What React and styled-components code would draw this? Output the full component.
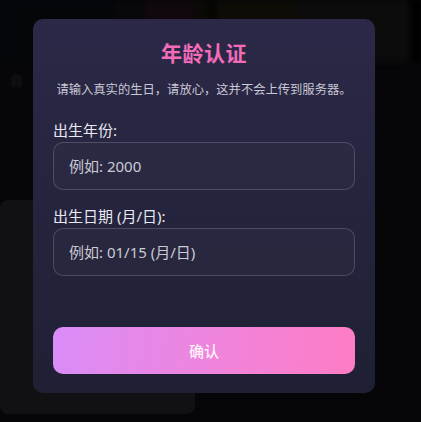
import React from 'react';
import styled, { createGlobalStyle } from 'styled-components';

const GlobalStyle = createGlobalStyle`
  * { box-sizing: border-box; }
  html, body {
    margin: 0;
    padding: 0;
    background: #050507;
    font-family: "Noto Sans", "Noto Sans CJK SC", sans-serif;
  }
`;

const Page = styled.div`
  position: relative;
  width: 100%;
  height: 422px;
  overflow: hidden;
  background: #060608;
`;

const BgStrip = styled.div`
  display: flex;
  height: 62px;
  filter: blur(3px);
`;

const BgTile = styled.div`
  flex: ${p => p.$flex || 1};
  background: ${p => p.$color};
`;

const BgText = styled.div`
  padding: 8px 0 0 10px;
  height: 130px;
  color: #1c1a20;
  font-size: 13px;
  filter: blur(1px);
`;

const BgCard = styled.div`
  width: 195px;
  height: 214px;
  margin-top: 8px;
  border-radius: 8px;
  background: #111113;
`;

const Overlay = styled.div`
  position: absolute;
  inset: 0;
  display: flex;
  align-items: flex-start;
  justify-content: flex-start;
  padding: 19px 0 0 33px;
`;

const Modal = styled.div`
  width: 342px;
  height: 374px;
  padding: 21px 20px 19px;
  border-radius: 10px;
  background: linear-gradient(180deg, #2b2947 0%, #25243e 50%, #1f2034 100%);
  display: flex;
  flex-direction: column;
`;

const Title = styled.h2`
  margin: 0;
  text-align: center;
  font-size: 21px;
  line-height: 27px;
  font-weight: 700;
  color: #f36cba;
  letter-spacing: 0.5px;
`;

const Subtitle = styled.p`
  margin: 13px 0 0;
  text-align: center;
  font-size: 12.3px;
  line-height: 19px;
  color: #c9c8d6;
  white-space: nowrap;
`;

const Field = styled.div`
  display: flex;
  flex-direction: column;
  gap: 1px;
  margin-top: ${p => p.$gap}px;
`;

const Label = styled.label`
  font-size: 15px;
  line-height: 21px;
  color: #e9e8f0;
`;

const Input = styled.input`
  height: 48px;
  padding: 0 15px;
  border-radius: 10px;
  border: 1px solid rgba(255, 255, 255, 0.17);
  background: rgba(255, 255, 255, 0.02);
  color: #eee;
  font-family: inherit;
  font-size: 15px;
  outline: none;

  &::placeholder {
    color: #cbcad4;
  }
`;

const ConfirmButton = styled.button`
  margin-top: auto;
  height: 47px;
  border: none;
  border-radius: 10px;
  background: linear-gradient(100deg, #d98cf8 0%, #ee85de 50%, #fe7cc4 100%);
  color: rgba(255, 255, 255, 0.92);
  font-family: inherit;
  font-size: 15px;
  font-weight: 500;
  cursor: pointer;
`;

export default function App() {
  return (
    <>
      <GlobalStyle />
      <Page>
        <BgStrip>
          <BgTile $flex={115} $color="#04060a" />
          <BgTile $flex={30} $color="#08070c" />
          <BgTile $flex={50} $color="#10080d" />
          <BgTile $flex={15} $color="#0b0904" />
          <BgTile $flex={5} $color="#000" />
          <BgTile $flex={85} $color="#0d0c07" />
          <BgTile $flex={110} $color="#0c0c0d" />
          <BgTile $flex={11} $color="#000" />
        </BgStrip>
        <BgText>自</BgText>
        <BgCard />
        <Overlay>
          <Modal>
            <Title>年龄认证</Title>
            <Subtitle>请输入真实的生日，请放心，这并不会上传到服务器。</Subtitle>
            <Field $gap={21}>
              <Label>出生年份:</Label>
              <Input placeholder="例如: 2000" />
            </Field>
            <Field $gap={16}>
              <Label>出生日期 (月/日):</Label>
              <Input placeholder="例如: 01/15 (月/日)" />
            </Field>
            <ConfirmButton>确认</ConfirmButton>
          </Modal>
        </Overlay>
      </Page>
    </>
  );
}
